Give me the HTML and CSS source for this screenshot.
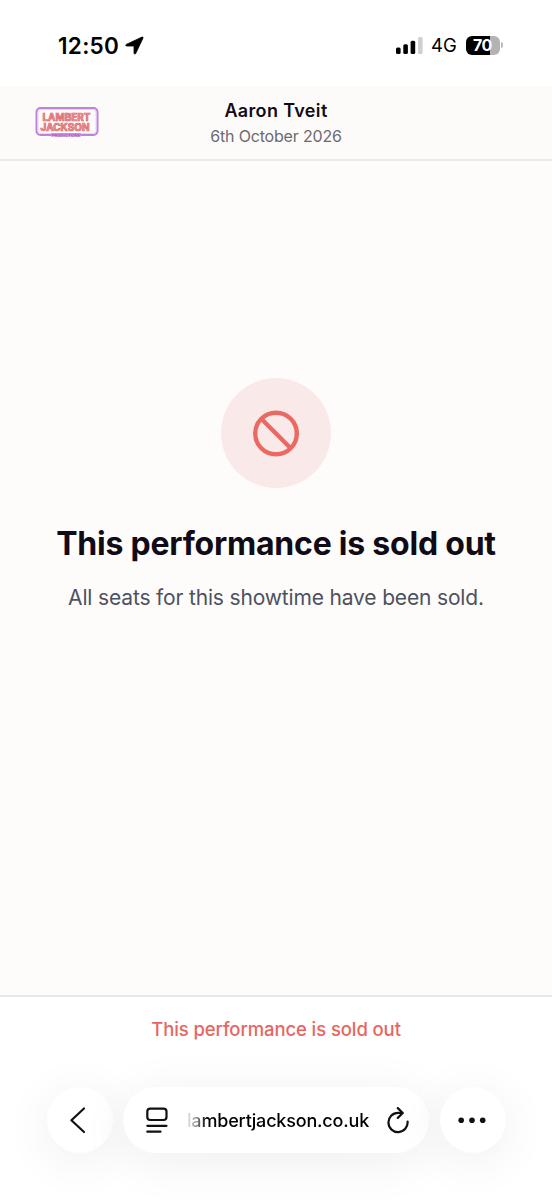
FILE: index.html
```html
<!DOCTYPE html>
<html lang="en-GB">
<head>
  <meta charset="UTF-8">
  <meta name="viewport" content="width=device-width, initial-scale=1.0">
  <title>Aaron Tveit</title>
  <link rel="stylesheet" href="styles.css">
</head>
<body>

  <div class="status-bar">
    <div class="clock">
      <span class="time">12:50</span>
      <svg class="location" width="19" height="19" viewBox="0 0 19 19">
        <path d="M1.300 8.400 17 1.100c.8-.3 1.300.2 1 1L10.700 17.500c-.4.9-1.700.7-1.700-.4V10H1.700c-1.100 0-1.300-1.200-.4-1.600z" stroke="#000" stroke-width=".8"/>
      </svg>
    </div>
    <div class="indicators">
      <svg class="signal" width="27" height="17" viewBox="0 0 27 17">
        <rect x="0" y="10.500" width="4.600" height="6.500" rx="1.500"/>
        <rect x="7.300" y="7.300" width="4.600" height="9.700" rx="1.500"/>
        <rect x="14.600" y="3.700" width="4.600" height="13.300" rx="1.500"/>
        <rect x="22" y="0" width="4.600" height="17" rx="1.500" fill="#cfcfcf"/>
      </svg>
      <span class="network">4G</span>
      <div class="battery"><span>70</span></div>
      <div class="battery-cap"></div>
    </div>
  </div>

  <header class="header">
    <svg class="logo" width="64" height="34" viewBox="0 0 64 34">
      <rect x="1.500" y="2" width="61" height="27" rx="4" fill="#f5eafa" stroke="#bd83da" stroke-width="2"/>
      <rect x="3" y="3.500" width="58" height="24" rx="3" fill="#fdfafa" stroke="#ead2f2" stroke-width="1"/>
      <text class="logo-name" x="7.500" y="14.500" textLength="48" lengthAdjust="spacingAndGlyphs">LAMBERT</text>
      <text class="logo-name" x="5.500" y="24.500" textLength="49" lengthAdjust="spacingAndGlyphs">JACKSON</text>
      <rect x="16" y="27" width="30" height="3.500" fill="#cb92e0"/>
      <text class="logo-sub" x="17" y="30.500" textLength="28" lengthAdjust="spacingAndGlyphs">PRODUCTIONS</text>
    </svg>
    <div class="event">
      <div class="event-name">Aaron Tveit</div>
      <div class="event-date">6th October 2026</div>
    </div>
  </header>

  <main class="main">
    <div class="icon-circle">
      <svg width="48" height="48" viewBox="0 0 48 48" fill="none" stroke="#ea6962" stroke-width="4.400">
        <circle cx="24" cy="24.500" r="20.800"/>
        <path d="M9.300 9.800 38.700 39.200"/>
      </svg>
    </div>
    <h1>This performance is sold out</h1>
    <p>All seats for this showtime have been sold.</p>
  </main>

  <footer class="footer">
    <div class="notice">This performance is sold out</div>
    <nav class="browser-bar">
      <div class="round-button">
        <svg width="66" height="66" viewBox="0 0 66 66" fill="none" stroke="#111" stroke-width="2.200" stroke-linecap="round" stroke-linejoin="round">
          <path d="M37 21.500 24.400 33.200 37 45"/>
        </svg>
      </div>
      <div class="address">
        <svg class="reader" width="22" height="26" viewBox="0 0 22 26" fill="none" stroke="#111" stroke-width="2.200" stroke-linecap="round">
          <rect x="1.300" y="1.600" width="19.200" height="11.400" rx="3"/>
          <path d="M1.300 18.800H20.500M1.300 24.700H14.500"/>
        </svg>
        <span class="url">lambertjackson.co.uk</span>
        <svg class="reload" width="22" height="27" viewBox="0 0 22 27" fill="none" stroke="#111" stroke-width="2.200" stroke-linecap="round" stroke-linejoin="round">
          <path d="M20.600 14.700A9.600 9.600 0 1 1 11 5.900H15.300"/>
          <path d="M10.800 1.100 15.700 6 10.800 10.900"/>
        </svg>
      </div>
      <div class="round-button">
        <svg width="66" height="66" viewBox="0 0 66 66" fill="#111">
          <circle cx="21.200" cy="33.300" r="2.800"/>
          <circle cx="32" cy="33.300" r="2.800"/>
          <circle cx="42.700" cy="33.300" r="2.800"/>
        </svg>
      </div>
    </nav>
  </footer>

</body>
</html>
```
FILE: styles.css
```css
* {
  box-sizing: border-box;
}
body {
  margin: 0;
  height: 1200px;
  display: flex;
  flex-direction: column;
  overflow: hidden;
  font-family: Inter, sans-serif;
  background: #fff;
  color: #100b16;
}
svg {
  display: block;
  flex: none;
}

.status-bar {
  height: 86px;
  display: flex;
  justify-content: space-between;
  padding: 34px 49px 0 58px;
  color: #000;
}
.clock, .indicators {
  display: flex;
  align-items: center;
  height: 22px;
}
.time {
  width: 67px;
  font-size: 22.500px;
  font-weight: 600;
  letter-spacing: 0.3px;
}
.signal {
  margin-right: 8px;
}
.network {
  width: 35px;
  font-size: 18.500px;
}
.battery {
  width: 34px;
  height: 19px;
  padding-left: 7px;
  border-radius: 6px;
  background: linear-gradient(90deg, #000 71%, #b3b3b3 71%);
  color: #fff;
  font-size: 16px;
  font-weight: 700;
  line-height: 19px;
  letter-spacing: -0.5px;
}
.battery-cap {
  width: 2px;
  height: 6px;
  margin-left: 1px;
  border-radius: 0 2px 2px 0;
  background: #bbb;
}

.header {
  height: 75px;
  display: grid;
  grid-template-columns: 64px 1fr 64px;
  padding: 14px 35px 0;
  border-bottom: 2px solid #e9e9ea;
  background: #fdfbfa;
}
.logo {
  margin-top: 6px;
}
.logo-name {
  font-size: 10px;
  font-weight: 700;
  line-height: 1;
  fill: #eda19f;
  stroke: #dc6065;
  stroke-width: 0.700px;
}
.logo-sub {
  font-size: 4px;
  fill: #8e3cb4;
}
.event {
  text-align: center;
}
.event-name {
  font-size: 18px;
  font-weight: 600;
  line-height: 22px;
  letter-spacing: 0.350px;
}
.event-date {
  margin-top: 3px;
  font-size: 16px;
  line-height: 22px;
  letter-spacing: -0.180px;
  color: #6c6a70;
}

.main {
  flex: 1;
  display: flex;
  flex-direction: column;
  align-items: center;
  padding-top: 217px;
  background: #fefcfa;
}
.icon-circle {
  width: 110px;
  height: 110px;
  display: flex;
  align-items: center;
  justify-content: center;
  border-radius: 50%;
  background: #f9e9e9;
}
h1 {
  margin: 36px 0 0;
  font-size: 32px;
  font-weight: 700;
  line-height: 40px;
  letter-spacing: -0.220px;
  white-space: nowrap;
}
p {
  margin: 20px 0 0;
  font-size: 21px;
  line-height: 28px;
  letter-spacing: -0.160px;
  color: #4d5260;
  white-space: nowrap;
}

.footer {
  height: 205px;
  border-top: 2px solid #e9e9ea;
  background: #fff;
}
.notice {
  margin-top: 20px;
  font-size: 18.500px;
  font-weight: 500;
  line-height: 24px;
  letter-spacing: -0.100px;
  text-align: center;
  color: #e76661;
}
.browser-bar {
  display: grid;
  grid-template-columns: 66px 306px 66px;
  gap: 10.500px;
  margin-top: 46px;
  padding-left: 46.500px;
}
.round-button, .address {
  height: 66px;
  border-radius: 33px;
  background: #fff;
  box-shadow: 0 8px 50px rgba(0, 0, 0, 0.070);
}
.address {
  display: flex;
  align-items: center;
  padding: 0 19px 0 22.500px;
}
.url {
  width: 184px;
  margin: 0 16px 0 19.500px;
  font-size: 18px;
  font-weight: 500;
  letter-spacing: -0.180px;
  white-space: nowrap;
  color: transparent;
  background: linear-gradient(90deg, #ddd, #ccc 4px, #000 20px);
  background-clip: text;
  -webkit-background-clip: text;
}
```
